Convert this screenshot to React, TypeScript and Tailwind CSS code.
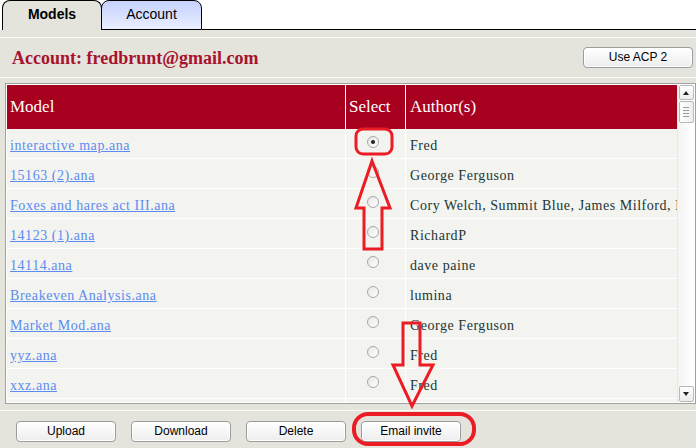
import React from "react";

const rows: [string, string][] = [
  ["interactive map.ana", "Fred"],
  ["15163 (2).ana", "George Ferguson"],
  ["Foxes and hares act III.ana", "Cory Welch, Summit Blue, James Milford, Nate Osgood"],
  ["14123 (1).ana", "RichardP"],
  ["14114.ana", "dave paine"],
  ["Breakeven Analysis.ana", "lumina"],
  ["Market Mod.ana", "George Ferguson"],
  ["yyz.ana", "Fred"],
  ["xxz.ana", "Fred"],
];

function Btn({ label, w }: { label: string; w: string }) {
  return (
    <button
      className={`${w} h-[21px] rounded-[4px] border border-[#9c9c9c] bg-gradient-to-b from-white to-[#ededed] text-[12px] leading-[19px] text-black shadow-[inset_0_0_0_1px_#ffffff]`}
    >
      {label}
    </button>
  );
}

function Radio({ checked }: { checked?: boolean }) {
  return (
    <div className="w-[12px] h-[12px] rounded-full border border-[#a8a8a8] bg-gradient-to-br from-[#e6e6e6] to-white flex items-center justify-center">
      {checked && <div className="w-[4px] h-[4px] rounded-full bg-[#222]" />}
    </div>
  );
}

export default function App() {
  return (
    <div
      className="relative w-[696px] h-[448px] overflow-hidden bg-white flex flex-col"
      style={{ fontFamily: '"Liberation Sans", Arial, sans-serif' }}
    >
      {/* Tabs */}
      <div className="h-[30px] flex items-end shrink-0">
        <div className="w-[2px] h-[30px]" />
        <div className="relative z-10 w-[100px] h-[30px] border border-b-0 border-black rounded-t-[8px] bg-[#e4e4dc] flex items-center justify-center text-[14px] font-bold text-black pb-[2px]">
          Models
        </div>
        <div className="ml-[-1px] w-[101px] h-[30px] border border-black rounded-t-[8px] rounded-b-none bg-gradient-to-b from-[#c6d2ff] to-[#eaeeff] flex items-center justify-center text-[14px] text-black pb-[1px]">
          Account
        </div>
        <div className="flex-1 h-[30px] border-b border-black" />
      </div>

      {/* Panel */}
      <div className="flex-1 bg-[#e4e4dc] flex flex-col">
        <div className="h-[7px]" />
        <div className="h-px bg-[#fbfbf8]" />
        <div className="h-[39px] flex items-center justify-between pl-[12px] pr-[3px]">
          <div
            className="text-[18px] font-bold text-[#a8122e] leading-none"
            style={{ fontFamily: '"Liberation Serif", Georgia, serif' }}
          >
            Account: fredbrunt@gmail.com
          </div>
          <Btn label="Use ACP 2" w="w-[110px]" />
        </div>
        <div className="h-px bg-[#fbfbf8]" />
        <div className="h-[5px]" />

        {/* Table frame */}
        <div className="ml-[5px] h-[321px] border border-[#a0a0a0] flex flex-col">
          <div className="flex-1 border border-white flex overflow-hidden">
            <div
              className="w-[670px] flex flex-col overflow-hidden"
              style={{ fontFamily: '"Liberation Serif", Georgia, serif' }}
            >
              <div className="h-[44px] shrink-0 bg-[#a8001f] flex text-white text-[17px]">
                <div className="w-[339px] border-r border-white flex items-center pl-[3px]">Model</div>
                <div className="w-[60px] border-r border-white flex items-center pl-[3px]">Select</div>
                <div className="w-[271px] flex items-center pl-[4px]">Author(s)</div>
              </div>
              <div className="flex-1 overflow-hidden bg-[#f3f3ef] flex flex-col">
                {rows.map(([m, a], i) => (
                  <div key={i} className="h-[30px] shrink-0 flex border-b border-white text-[14px] tracking-[0.55px]">
                    <div className="w-[339px] border-r border-white flex items-center pl-[3px] pt-[4px]">
                      <span className="text-[#5b8cf0] underline">{m}</span>
                    </div>
                    <div className="w-[60px] border-r border-white flex items-center pl-[21px] pb-[3px]">
                      <Radio checked={i === 0} />
                    </div>
                    <div className="w-[271px] flex items-center pl-[4px] pt-[4px] whitespace-nowrap overflow-hidden text-[#213636]">
                      {a}
                    </div>
                  </div>
                ))}
                <div className="flex-1 flex">
                  <div className="w-[339px] border-r border-white" />
                  <div className="w-[60px] border-r border-white" />
                </div>
              </div>
            </div>
            {/* Scrollbar */}
            <div className="w-[17px] bg-gradient-to-r from-[#f4f4f4] to-white border-l border-[#e8e8e8] flex flex-col items-center">
              <div className="w-[15px] h-[15px] border border-[#b8b8b8] rounded-[2px] bg-gradient-to-b from-white to-[#ececec] flex items-center justify-center">
                <div className="w-0 h-0 border-l-[3px] border-r-[3px] border-b-[4px] border-l-transparent border-r-transparent border-b-[#222]" />
              </div>
              <div className="w-[15px] h-[22px] mt-px border border-[#b8b8b8] rounded-[2px] bg-gradient-to-r from-white to-[#ededed] flex flex-col items-center justify-center gap-[2px]">
                <div className="w-[6px] h-px bg-[#9a9a9a]" />
                <div className="w-[6px] h-px bg-[#9a9a9a]" />
                <div className="w-[6px] h-px bg-[#9a9a9a]" />
                <div className="w-[6px] h-px bg-[#9a9a9a]" />
              </div>
              <div className="flex-1" />
              <div className="w-[15px] h-[16px] border border-[#b8b8b8] rounded-[2px] bg-gradient-to-b from-white to-[#ececec] flex items-center justify-center">
                <div className="w-0 h-0 border-l-[3px] border-r-[3px] border-t-[4px] border-l-transparent border-r-transparent border-t-[#222]" />
              </div>
            </div>
          </div>
        </div>

        <div className="h-[6px]" />
        <div className="h-px bg-[#fbfbf8]" />
        <div className="h-[10px]" />
        <div className="flex pl-[16px] gap-[15px]">
          <Btn label="Upload" w="w-[100px]" />
          <Btn label="Download" w="w-[100px]" />
          <Btn label="Delete" w="w-[100px]" />
          <Btn label="Email invite" w="w-[100px]" />
        </div>
      </div>

      {/* Red annotations */}
      <svg className="absolute left-0 top-0 pointer-events-none" width="696" height="448" viewBox="0 0 696 448">
        <g fill="none" stroke="#ec1c24" strokeWidth="3" strokeLinejoin="miter">
          <rect x="356" y="129" width="36" height="25" rx="7" />
          <polygon points="372,161 390,208 382,208 382,249 364,249 364,208 356,208" />
          <polygon points="403,323 420,323 420,365 433,365 412,406 393,365 403,365" />
          <rect x="354" y="414" width="120" height="30" rx="14" strokeWidth="4" />
        </g>
      </svg>
    </div>
  );
}
